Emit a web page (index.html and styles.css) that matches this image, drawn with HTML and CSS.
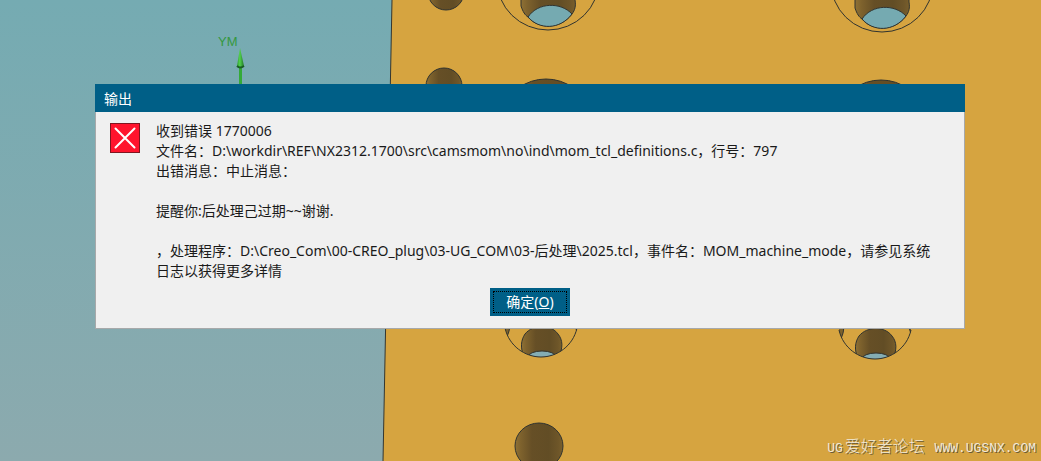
FILE: index.html
```html
<!DOCTYPE html>
<html lang="zh-CN">
<head>
<meta charset="utf-8">
<meta name="viewport" content="width=device-width, initial-scale=1">
<title>输出</title>
<link rel="stylesheet" href="styles.css">
</head>
<body>
<main class="viewport">
  <svg class="scene" viewBox="0 0 1041 461" preserveAspectRatio="xMidYMin slice" aria-hidden="true">
    <defs>
      <linearGradient id="sky" x1="0" y1="0" x2="0" y2="1">
        <stop offset="0" stop-color="#75abb2"/>
        <stop offset="1" stop-color="#8caaae"/>
      </linearGradient>
      <linearGradient id="bore" x1="0" y1="0" x2="1" y2="0">
        <stop offset="0" stop-color="#8f7135"/>
        <stop offset="0.12" stop-color="#7e622d"/>
        <stop offset="0.35" stop-color="#664f26"/>
        <stop offset="0.7" stop-color="#624d25"/>
        <stop offset="0.9" stop-color="#6e5629"/>
        <stop offset="1" stop-color="#795f2c"/>
      </linearGradient>
      <linearGradient id="cone" x1="0" y1="0" x2="1" y2="0">
        <stop offset="0" stop-color="#2f9a32"/>
        <stop offset="0.4" stop-color="#52d24c"/>
        <stop offset="1" stop-color="#1f7526"/>
      </linearGradient>
      <clipPath id="lower-rim">
        <path d="M-36 320V328C-32 346-16 357 0 357C16 357 32 346 36 328V320Z"/>
      </clipPath>
      <g id="upper-hole">
        <ellipse cx="0" cy="-20" rx="51" ry="50" fill="none"/>
        <path d="M-27 -22V6C-25 12-23 15-20 17C-10 29 12 30 24 14C27 10 28 6 27 0V-22Z" fill="url(#bore)"/>
        <path d="M-20 17C-10 2 13 2 24 14C12 30-9 30-20 17Z" fill="#75aab1"/>
      </g>
      <g id="lower-hole">
        <g clip-path="url(#lower-rim)">
          <path d="M-40 320H-31Q-31 332-34 336H-40Z" fill="#7d622c"/>
          <path d="M40 320H34Q34 328 36 332H40Z" fill="#6a5228"/>
          <path d="M-17 356C-21 348-20 340-16 334C-8 324 10 324 17 334C22 340 22 348 18 356Z" fill="url(#bore)"/>
          <ellipse cx="1" cy="357" rx="14" ry="6" fill="#84adb3"/>
        </g>
        <path d="M-36 328C-32 346-16 357 0 357C16 357 32 346 36 328" fill="none"/>
      </g>
    </defs>
    <rect width="1041" height="461" fill="url(#sky)"/>
    <path d="M392 0H1041V461H383Z" fill="#d6a440"/>
    <path d="M392 0L383 461" stroke="#343630" fill="none"/>
    <g stroke="#30332f">
      <ellipse cx="446" cy="-8" rx="18" ry="18" fill="url(#bore)"/>
      <ellipse cx="444" cy="86" rx="18" ry="18" fill="url(#bore)"/>
      <ellipse cx="546" cy="109" rx="38" ry="30" fill="url(#bore)"/>
      <ellipse cx="881" cy="110" rx="38" ry="30" fill="url(#bore)"/>
      <ellipse cx="539" cy="446" rx="24" ry="23" fill="url(#bore)"/>
      <use href="#upper-hole" x="548"/>
      <use href="#upper-hole" x="882" y="2"/>
      <use href="#lower-hole" x="541"/>
      <use href="#lower-hole" x="875" y="2"/>
    </g>
    <path d="M239 66H242V100H239Z" fill="#34aa38"/>
    <path d="M240 48L244 66Q240 69 237 66Z" fill="url(#cone)"/>
    <path d="M237 66Q240 69 244 66" stroke="#195d23" stroke-width="2" fill="none"/>
    <text class="axis-label" x="218" y="46">YM</text>
  </svg>

  <section class="dialog" role="alertdialog" aria-labelledby="dialog-title" aria-describedby="dialog-message">
    <h1 class="dialog-title" id="dialog-title">输出</h1>
    <div class="dialog-body">
      <svg class="error-icon" viewBox="0 0 30 30" role="img" aria-label="错误">
        <rect x="0.5" y="0.5" width="29" height="29" fill="#ff142d" stroke="#7f1620"/>
        <path d="M5.500 5.500L24.500 24.500M24.500 5.500L5.500 24.500" stroke="#fff" stroke-width="2" stroke-linecap="round"/>
      </svg>
      <div class="message" id="dialog-message">
        <p>收到错误 1770006<br>文件名：D:\workdir\REF\NX2312.1700\src\camsmom\no\ind\mom_tcl_definitions.c，行号：797<br>出错消息：中止消息：</p>
        <p>提醒你:后处理己过期~~谢谢.</p>
        <p>，处理程序：D:\Creo_Com\00-CREO_plug\03-UG_COM\03-后处理\2025.tcl，事件名：MOM_machine_mode，请参见系统日志以获得更多详情</p>
      </div>
    </div>
    <div class="dialog-actions">
      <button class="confirm" type="button" accesskey="o"><span class="confirm-label">确定(<u>O</u>)</span></button>
    </div>
  </section>

  <p class="watermark"><span>UG</span><span class="watermark-cjk">爱好者论坛</span><span>&nbsp;WWW.UGSNX.COM</span></p>
</main>
</body>
</html>
```
FILE: styles.css
```css
* {
  box-sizing: border-box;
}

body {
  margin: 0;
  font-family: "Noto Sans", "Noto Sans CJK SC", sans-serif;
  font-size: 14px;
  line-height: 20px;
  color: #1a1a1a;
}

p,
h1 {
  margin: 0;
}

.viewport {
  position: relative;
  display: flex;
  flex-direction: column;
  justify-content: space-between;
  min-height: 100vh;
  padding: 84px 76px 0 95px;
  overflow: hidden;
}

.scene {
  position: absolute;
  inset: 0;
  width: 100%;
  height: 100%;
}

.axis-label {
  font-family: "Liberation Sans", Arial, sans-serif;
  font-size: 13px;
  fill: #35983f;
}

.dialog {
  position: relative;
  background: #f0f0f0;
  border: 1px solid #a7a9aa;
  border-top: 0;
}

.dialog-title {
  margin: 0 -1px;
  padding: 5px 9px 3px;
  background: #005f87;
  color: #fff;
  font-size: 14px;
  font-weight: 400;
}

.dialog-body {
  display: flex;
  gap: 16px;
  padding: 9px 24px 0 14px;
}

.error-icon {
  flex: none;
  width: 30px;
  height: 30px;
  margin-top: 2px;
}

.message {
  flex: 1;
  min-width: 0;
  display: grid;
  gap: 20px;
  overflow-wrap: anywhere;
}

.dialog-actions {
  display: flex;
  justify-content: center;
  padding: 7px 0 12px;
}

.confirm {
  width: 80px;
  height: 28px;
  padding: 3px;
  border: 0;
  background: #005f87;
  color: #fff;
  font: inherit;
}

.confirm-label {
  display: block;
  border: 1px dotted #000;
}

.watermark {
  position: absolute;
  right: 5px;
  bottom: 2px;
  display: flex;
  align-items: baseline;
  gap: 2px;
  font-family: "Liberation Mono", "Noto Sans CJK SC", monospace;
  font-size: 13px;
  color: #f1ead8;
  text-shadow: 1px 1px 0 #6b5a35;
}

.watermark-cjk {
  font-size: 16px;
  font-weight: 300;
}
```
